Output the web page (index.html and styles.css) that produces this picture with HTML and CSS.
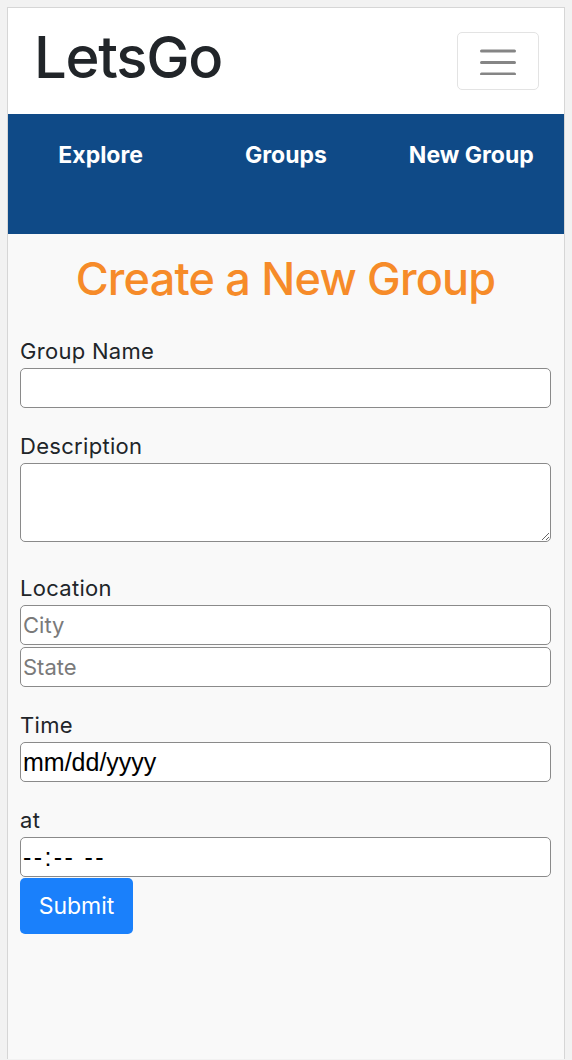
FILE: index.html
```html
<!DOCTYPE html>
<html lang="en">
<head>
<meta charset="utf-8">
<title>LetsGo - Create a New Group</title>
<link rel="stylesheet" href="styles.css">
</head>
<body>
<div class="page">
  <header class="topbar">
    <a class="brand" href="#">LetsGo</a>
    <button class="toggler" type="button" aria-label="Toggle navigation">
      <svg width="36" height="27" viewBox="0 0 36 27"><g stroke="#858585" stroke-width="3" stroke-linecap="round"><line x1="1.5" y1="3" x2="34.5" y2="3"/><line x1="1.5" y1="14.5" x2="34.5" y2="14.5"/><line x1="1.5" y1="26" x2="34.5" y2="26"/></g></svg>
    </button>
  </header>
  <nav class="mainnav">
    <a href="#">Explore</a>
    <a href="#">Groups</a>
    <a href="#">New Group</a>
  </nav>
  <main class="content">
    <h1 class="title">Create a New Group</h1>
    <form class="form">
      <div class="group">
        <label class="label">Group Name</label>
        <input class="field" type="text">
      </div>
      <div class="group group-area">
        <label class="label">Description</label>
        <textarea class="field area"></textarea>
      </div>
      <div class="group">
        <label class="label">Location</label>
        <input class="field" type="text" placeholder="City">
        <input class="field stacked" type="text" placeholder="State">
      </div>
      <div class="group">
        <label class="label">Time</label>
        <input class="field mono" type="text" placeholder="mm/dd/yyyy">
      </div>
      <div class="group group-last">
        <label class="label">at</label>
        <input class="field mono clock" type="text" placeholder="--:-- --">
      </div>
      <button class="submit" type="button">Submit</button>
    </form>
  </main>
</div>
</body>
</html>
```
FILE: styles.css
```css
html, body {
  margin: 0;
  padding: 0;
  background: #f2f2f2;
}
body {
  font-family: Inter, "Noto Sans", sans-serif;
  color: #212529;
}
.page {
  margin: 7px 7px 0;
  border: 1px solid #d6d6d6;
  border-bottom: none;
  background: #f9f9f9;
  min-height: 1052px;
  box-sizing: border-box;
}
.topbar {
  height: 106px;
  background: #fff;
  display: flex;
  align-items: center;
  justify-content: space-between;
  padding: 0 25px 0 26px;
  box-sizing: border-box;
}
.brand {
  font-size: 58px;
  font-weight: 500;
  line-height: 1;
  color: #212529;
  text-decoration: none;
  letter-spacing: -1.3px;
  margin-top: -9px;
}
.toggler {
  width: 82px;
  height: 58px;
  border: 1px solid #e3e3e3;
  border-radius: 5px;
  background: #fff;
  display: flex;
  align-items: center;
  justify-content: center;
  padding: 0;
}
.mainnav {
  height: 120px;
  background: #0f4a87;
  display: grid;
  grid-template-columns: repeat(3, 1fr);
  padding-top: 27px;
  box-sizing: border-box;
  align-items: start;
}
.mainnav a {
  color: #fff;
  font-weight: 700;
  font-size: 23px;
  line-height: 28px;
  text-align: center;
  text-decoration: none;
  letter-spacing: 0;
}
.content {
  padding: 0 13px 0 12px;
}
.title {
  margin: 0;
  padding: 17px 0 29px;
  text-align: center;
  color: #f68b29;
  font-size: 45px;
  line-height: 56px;
  font-weight: 500;
  letter-spacing: -0.8px;
}
.group {
  margin-bottom: 23px;
}
.group-area {
  margin-bottom: 31px;
}
.group-last {
  margin-bottom: 0;
}
.label {
  display: block;
  font-size: 22px;
  line-height: 30px;
  margin-bottom: 2px;
  letter-spacing: 0.3px;
}
.field {
  display: block;
  width: 100%;
  height: 40px;
  box-sizing: border-box;
  border: 1px solid #8a8a8a;
  border-radius: 5px;
  background: #fff;
  padding: 1px 2px;
  font-family: Inter, "Noto Sans", sans-serif;
  font-size: 22px;
  color: #212529;
  margin: 0;
}
.field::placeholder {
  color: #7a7a7a;
}
.stacked {
  margin-top: 2px;
}
.area {
  height: 79px;
  resize: vertical;
}
.mono {
  font-family: "Liberation Sans", Arial, sans-serif;
  font-size: 25px;
}
.mono::placeholder {
  color: #000;
}
.clock {
  letter-spacing: 2.4px;
}
.submit {
  display: block;
  margin-top: 1px;
  width: 113px;
  height: 56px;
  border: none;
  border-radius: 5px;
  background: #1a80fb;
  color: #fff;
  font-family: Inter, "Noto Sans", sans-serif;
  font-size: 23px;
  padding: 0;
}
```
